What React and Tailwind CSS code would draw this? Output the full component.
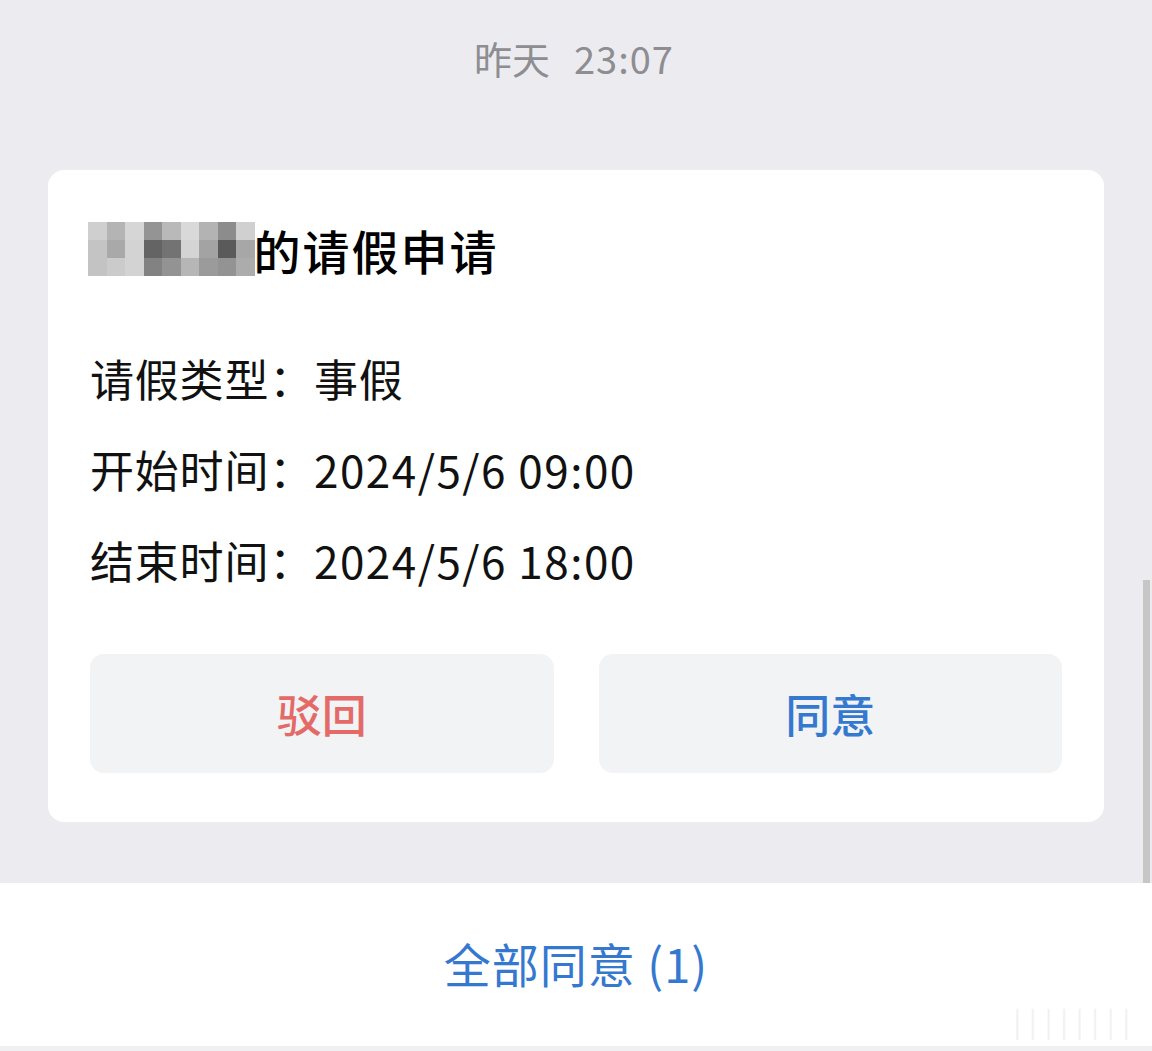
import React from "react";

const mosaic = [
  ["#cfcfcf", "#b4b4b4", "#d6d6d6", "#949494", "#b9b9b9", "#d9d9d9", "#b3b3b3", "#8c8c8c", "#d0d0d0"],
  ["#c4c4c4", "#a9a9a9", "#d3d3d3", "#646464", "#737373", "#d4d4d4", "#a3a3a3", "#5a5a5a", "#a7a7a7"],
  ["#c3c3c3", "#cbcbcb", "#d3d3d3", "#828282", "#939393", "#b6b6b6", "#9b9b9b", "#939393", "#acacac"],
];

export default function App() {
  const font = { fontFamily: '"Noto Sans CJK SC", "Noto Sans", sans-serif' };
  return (
    <div className="w-[1152px] h-[1051px] overflow-hidden relative flex flex-col" style={font}>
      <div className="bg-[#ececf0] flex flex-col pt-[30px] h-[883px]">
        <div className="flex justify-center gap-[24px] text-[38px] leading-[56px] text-[#8d8d92] pr-[4px]">
          <span>昨天</span>
          <span className="tracking-[1px]">23:07</span>
        </div>
        <div className="mx-[48px] mt-[84px] bg-white rounded-[16px] px-[42px] pt-[47px] pb-[49px] flex flex-col">
          <div className="flex items-center h-[66px]">
            <div className="flex flex-col ml-[-2px] mt-[-2px]">
              {mosaic.map((row, i) => (
                <div key={i} className="flex">
                  {row.map((c, j) => (
                    <div key={j} className="w-[18.5px] h-[18px]" style={{ background: c }} />
                  ))}
                </div>
              ))}
            </div>
            <span className="text-[47px] font-medium text-black leading-[66px] tracking-[2px] ml-[-1px]">的请假申请</span>
          </div>
          <div className="mt-[50px] flex flex-col text-[44px] leading-[91px] text-[#111] tracking-[0.8px]">
            <div>请假类型：事假</div>
            <div>开始时间：<span className="tracking-[1.5px]">2024/5/6 09:00</span></div>
            <div>结束时间：<span className="tracking-[1.5px]">2024/5/6 18:00</span></div>
          </div>
          <div className="mt-[48px] flex gap-[45px]">
            <div className="flex-1 h-[119px] rounded-[14px] bg-[#f2f3f5] flex items-center justify-center text-[45px] font-medium text-[#e46a68]">驳回</div>
            <div className="flex-1 h-[119px] rounded-[14px] bg-[#f2f3f5] flex items-center justify-center text-[45px] font-medium text-[#3478d0]">同意</div>
          </div>
        </div>
      </div>
      <div className="bg-white h-[163px] flex items-center justify-center text-[47px] text-[#3478d0] tracking-[1px] pb-[2px]">全部同意 (1)</div>
      <div className="flex-1 bg-[#f0f0f3]" />
      <div className="absolute right-[2px] top-[580px] w-[7px] h-[303px] bg-[#c6c6c6]" />
      <div className="absolute right-[14px] bottom-[10px] text-[28px] text-[#f1f1f1] tracking-[8px]">||||||||</div>
    </div>
  );
}
